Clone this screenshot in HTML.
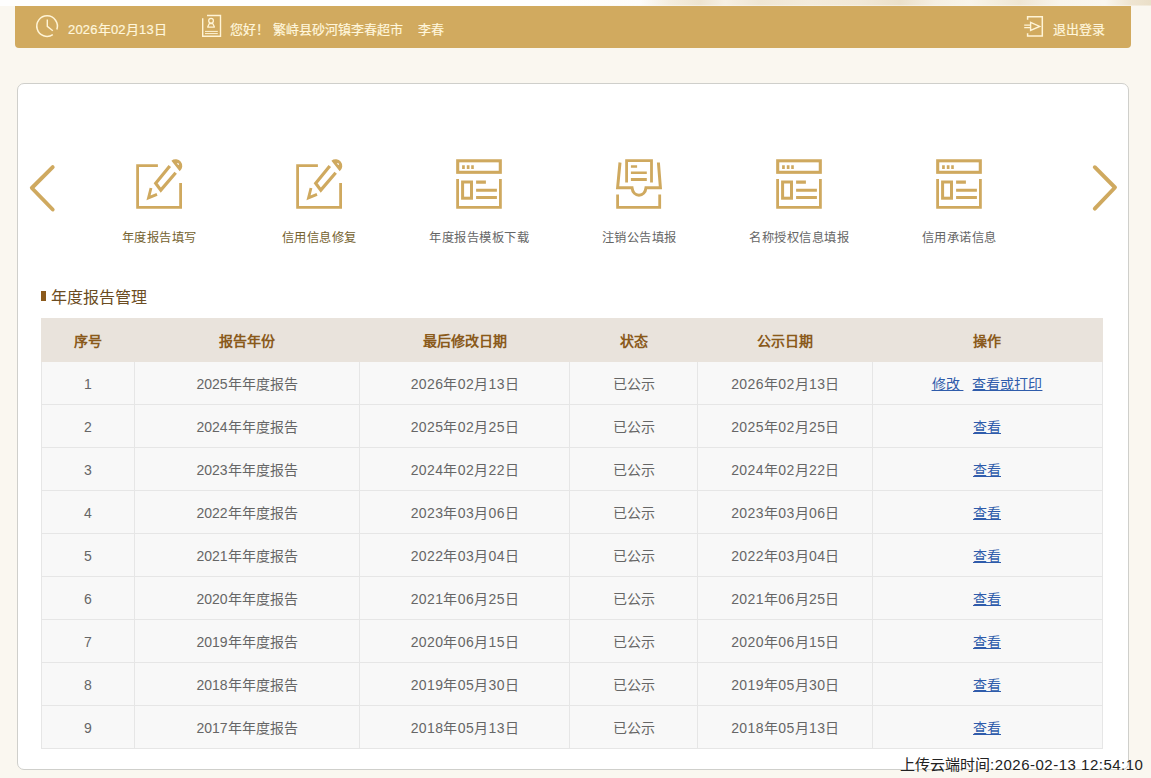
<!DOCTYPE html>
<html lang="zh-CN">
<head>
<meta charset="utf-8">
<title>年度报告管理</title>
<style>
*{box-sizing:border-box;margin:0;padding:0}
html,body{width:1151px;height:778px;overflow:hidden}
body{position:relative;background:#faf7f0;font-family:"Liberation Sans",sans-serif;color:#666}
.abs{position:absolute}
#texture{left:560px;top:0;width:591px;height:6px;background:linear-gradient(180deg,rgba(250,247,240,0) 0,rgba(250,247,240,0) 75%,rgba(250,247,240,.7) 100%),linear-gradient(90deg,#fefefe 0px,#fdfcfa 80px,#f4eddf 110px,#eee4d0 140px,#f6f0e4 165px,#efe6d4 200px,#f3ebdc 250px,#f1e8d7 300px,#ebe0ca 340px,#f5efe2 375px,#f8f4ea 410px,#efe6d3 460px,#f8f4ec 500px,#f9f6ef 545px,#efe5d2 570px,#eadfc8 591px)}
#topwhite{left:0;top:0;width:560px;height:6px;background:#fefefe}
#bar{left:15px;top:6px;width:1116px;height:42px;background:#d1aa5f;border-radius:0 0 4px 4px;color:#fff6dc;font-size:13px}
#bar .t{position:absolute;top:14.5px;line-height:18px;white-space:nowrap;-webkit-text-stroke:0.2px #fff6dc}
#panel{left:17px;top:83px;width:1112px;height:687px;background:#fff;border:1px solid #cfcfcb;border-radius:7px}
.lab{position:absolute;top:229px;width:160px;text-align:center;font-size:12.25px;letter-spacing:0.5px;line-height:18px;color:#666;white-space:nowrap}
.lab.on{color:#75622f}
#sec{left:51px;top:286.5px;font-size:16px;line-height:22px;color:#6b4c22;white-space:nowrap}
#secbar{left:41px;top:291px;width:5px;height:10px;background:#8b5a1c}
#tbl{left:41px;top:318px;width:1062px}
.row{display:flex;height:43px;border-bottom:1px solid #e6e6e6;background:#f8f8f8;font-size:14px;line-height:44px;color:#666}
.row.h{height:44px;border-bottom:0;background:#e9e3dc;color:#8a5a1b;font-weight:bold;line-height:47px}
.row>div{border-left:1px solid #e6e6e6;text-align:center;white-space:nowrap;overflow:hidden}
.row.h>div{border-left-color:#e9e3dc}
.row>div:last-child{border-right:1px solid #e6e6e6}
.row.h>div:last-child{border-right-color:#e9e3dc}
.c1{width:93px}.c2{width:225px}.c3{width:210px}.c4{width:128px}.c5{width:175px}.row:not(.h) .c3,.row:not(.h) .c5{letter-spacing:0.4px;padding-left:1px}.c6{width:231px;padding-right:1px}
a{color:#2f5cab;text-decoration:underline}
#stamp{left:900px;top:755px;font-size:15px;line-height:19px;color:#222;white-space:nowrap}
</style>
</head>
<body>
<div id="topwhite" class="abs"></div>
<div id="texture" class="abs"></div>

<div id="bar" class="abs">
  <span class="t" style="left:53px;letter-spacing:0.2px">2026年02月13日</span>
  <span class="t" style="left:215px">您好！</span>
  <span class="t" style="left:258px">繁峙县砂河镇李春超市</span>
  <span class="t" style="left:403px">李春</span>
  <span class="t" style="left:1038px">退出登录</span>
</div>

<svg id="baricons" class="abs" style="left:0;top:6px" width="1151" height="42" viewBox="0 6 1151 42" fill="none" stroke="#fff4d6" stroke-width="1.4">
  <!-- clock: circle with gap at lower right -->
  <path d="M52.8 34.7A10.3 10.3 0 1 1 56.85 29.4" stroke-width="1.5"/>
  <path d="M47.3 19.6V26.3L52.8 30.8" stroke-linejoin="miter"/>
  <!-- user card -->
  <path d="M207 15.5H220.5V36.3H202.7V18.2" stroke-width="1.4"/>
  <circle cx="211.05" cy="20.7" r="2.35" stroke-width="1.3"/>
  <path d="M209.2 23.7L207.7 27.1H214.4L212.9 23.7Z" stroke-width="1.3" stroke-linejoin="round"/>
  <path d="M205 31.4H217.8M205 33.6H217.8" stroke-width="1"/>
  <!-- logout -->
  <path d="M1027.6 19.8V16.8H1042.3V36H1027.6V33.2" stroke-width="1.5"/>
  <path d="M1024.2 25.2H1030.4M1024.2 27.7H1030.4" stroke-width="1.3"/>
  <path d="M1030.6 22.4L1039.7 26.45L1030.6 30.5Z" stroke-width="1.4" stroke-linejoin="miter"/>
</svg>
<div id="panel" class="abs"></div>

<!-- ICONS -->
<svg id="icons" class="abs" style="left:0;top:140px" width="1151" height="80" viewBox="0 140 1151 80" fill="none" stroke="#cfa95f">
  <defs>
    <g id="pencil">
      <path d="M157.9 165.6H137.6V207.4H180.6V183" stroke-width="2.8"/>
      <path d="M169.8 166L155.7 183.3L160.8 190.1L175.7 172.7" stroke-width="3.2" stroke-linejoin="miter"/>
      <path d="M151 188L148.5 197.9L157 194.4" stroke-width="2.8" stroke-linejoin="miter"/>
      <path d="M171.4 160.7A6.7 6.7 0 0 1 179.7 171.3Z" fill="#cfa95f" stroke="none"/>
      <path d="M177.6 163.1L178.6 164.8" stroke="#fff" stroke-width="1.1"/>
    </g>
    <g id="browser">
      <rect x="457.7" y="160.8" width="42.6" height="11.5" stroke-width="3.1"/>
      <path d="M462.1 165.3h2.7v3.6h-2.7zM466.8 165.3h2.7v3.6h-2.7zM471.2 165.3h2.6v3.6h-2.6z" fill="#cfa95f" stroke="none"/>
      <path d="M457.6 179V207.4H500.4V179" stroke-width="2.8"/>
      <rect x="462.6" y="182" width="8.9" height="16.2" stroke-width="3"/>
      <path d="M476.1 180.5h9.8v3.3h-9.8zM476.1 188.7h20.8v3.1h-20.8zM476.1 195.9h20.8v3.1h-20.8z" fill="#cfa95f" stroke="none"/>
    </g>
    <g id="inbox">
      <path d="M626.6 182.6V160.6H651.5V182.6" stroke-width="2.8"/>
      <path d="M630.9 165.3h6.2v2.5h-6.2zM630.9 171.5h15.9v2.6h-15.9zM630.9 178.1h15.9v2.9h-15.9z" fill="#cfa95f" stroke="none"/>
      <path d="M620 162.5L617.6 187.7H632C632.6 192.6 635.6 195.2 639 195.2C642.4 195.2 645.4 192.6 646 187.7H660.4L658.4 162.5" stroke-width="3" stroke-linejoin="miter"/>
      <path d="M617.6 194.4V207.4H659.7V194.4" stroke-width="2.8"/>
    </g>
  </defs>
  <use href="#pencil"/>
  <use href="#pencil" x="160"/>
  <use href="#browser"/>
  <use href="#inbox"/>
  <use href="#browser" x="320"/>
  <use href="#browser" x="480"/>
  <path d="M52.7 167.1L31.8 188L52.7 209.5" stroke-width="3.9" stroke-linecap="round" stroke-linejoin="round"/>
  <path d="M1094.8 167.2L1115 187.5L1094.8 208.6" stroke-width="3.9" stroke-linecap="round" stroke-linejoin="round"/>
</svg>

<div class="lab on" style="left:79px">年度报告填写</div>
<div class="lab on" style="left:239px">信用信息修复</div>
<div class="lab" style="left:399px">年度报告模板下载</div>
<div class="lab" style="left:559px">注销公告填报</div>
<div class="lab" style="left:719px">名称授权信息填报</div>
<div class="lab" style="left:879px">信用承诺信息</div>

<div id="secbar" class="abs"></div>
<div id="sec" class="abs">年度报告管理</div>

<div id="tbl" class="abs">
  <div class="row h"><div class="c1">序号</div><div class="c2">报告年份</div><div class="c3">最后修改日期</div><div class="c4">状态</div><div class="c5">公示日期</div><div class="c6">操作</div></div>
  <div class="row"><div class="c1">1</div><div class="c2">2025年年度报告</div><div class="c3">2026年02月13日</div><div class="c4">已公示</div><div class="c5">2026年02月13日</div><div class="c6"><a>修改&nbsp;</a><span style="display:inline-block;width:9px"></span><a>查看或打印</a></div></div>
  <div class="row"><div class="c1">2</div><div class="c2">2024年年度报告</div><div class="c3">2025年02月25日</div><div class="c4">已公示</div><div class="c5">2025年02月25日</div><div class="c6"><a>查看</a></div></div>
  <div class="row"><div class="c1">3</div><div class="c2">2023年年度报告</div><div class="c3">2024年02月22日</div><div class="c4">已公示</div><div class="c5">2024年02月22日</div><div class="c6"><a>查看</a></div></div>
  <div class="row"><div class="c1">4</div><div class="c2">2022年年度报告</div><div class="c3">2023年03月06日</div><div class="c4">已公示</div><div class="c5">2023年03月06日</div><div class="c6"><a>查看</a></div></div>
  <div class="row"><div class="c1">5</div><div class="c2">2021年年度报告</div><div class="c3">2022年03月04日</div><div class="c4">已公示</div><div class="c5">2022年03月04日</div><div class="c6"><a>查看</a></div></div>
  <div class="row"><div class="c1">6</div><div class="c2">2020年年度报告</div><div class="c3">2021年06月25日</div><div class="c4">已公示</div><div class="c5">2021年06月25日</div><div class="c6"><a>查看</a></div></div>
  <div class="row"><div class="c1">7</div><div class="c2">2019年年度报告</div><div class="c3">2020年06月15日</div><div class="c4">已公示</div><div class="c5">2020年06月15日</div><div class="c6"><a>查看</a></div></div>
  <div class="row"><div class="c1">8</div><div class="c2">2018年年度报告</div><div class="c3">2019年05月30日</div><div class="c4">已公示</div><div class="c5">2019年05月30日</div><div class="c6"><a>查看</a></div></div>
  <div class="row"><div class="c1">9</div><div class="c2">2017年年度报告</div><div class="c3">2018年05月13日</div><div class="c4">已公示</div><div class="c5">2018年05月13日</div><div class="c6"><a>查看</a></div></div>
</div>

<div id="stamp" class="abs">上传云端时间<span style="letter-spacing:0.5px">:2026-02-13 12:54:10</span></div>
</body>
</html>
